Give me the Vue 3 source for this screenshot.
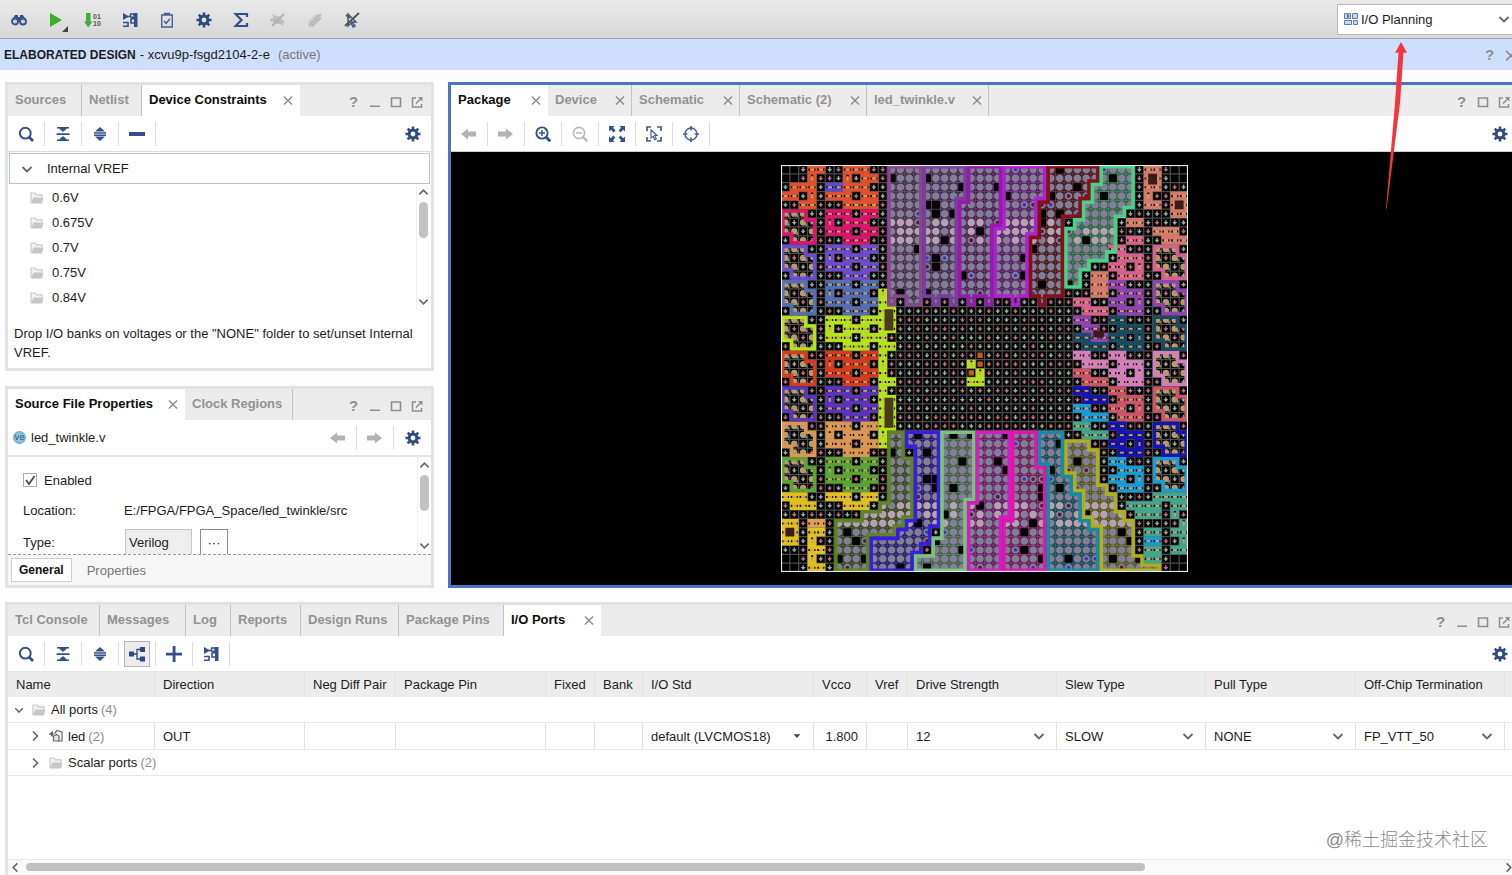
<template>
  <div class="app">
    <svg class="sprite" aria-hidden="true">
      <symbol id="i-binoculars" viewBox="0 0 16 16">
        <path d="M4 3h3v2h2V3h3l3 5v2H1V8z" fill="#3a5286" />
        <circle cx="4" cy="9.5" r="3" fill="#c9d2e4" stroke="#3a5286" stroke-width="1.8" />
        <circle cx="12" cy="9.5" r="3" fill="#c9d2e4" stroke="#3a5286" stroke-width="1.8" />
      </symbol>
      <symbol id="i-play" viewBox="0 0 16 16"><path d="M2 1l12 7-12 7z" fill="#3dae2b" /></symbol>
      <symbol id="i-bits" viewBox="0 0 16 16"><path d="M2 1h4.500v8.500h2L4.200 15.500 0 9.500h2z" fill="#3fae3c" /></symbol>
      <symbol id="i-route" viewBox="0 0 16 16">
        <path d="M1 1l6 3.500L1 8zM12 1h3.500v14H12z" fill="#34508a" />
        <path d="M5 4.500h3.500V2H12v2.500" fill="none" stroke="#34508a" stroke-width="1.500" />
        <path d="M8.500 4.500h4v3h-4z" fill="#34508a" />
        <path d="M1 10.500h5V15M1 14.200h5M9 7v4h3" fill="none" stroke="#34508a" stroke-width="1.600" />
      </symbol>
      <symbol id="i-clip" viewBox="0 0 16 16">
        <path d="M2.700 3h10.600v12H2.700zM5.500 3V1.500h5V3" fill="none" stroke="#4c6293" stroke-width="1.400" />
        <path d="M5 9l2.200 2.300L11 6.800" fill="none" stroke="#4c6293" stroke-width="1.500" />
      </symbol>
      <symbol id="i-gear" viewBox="0 0 16 16">
        <circle cx="8" cy="8" r="3.900" fill="none" stroke="#2f4a80" stroke-width="3" />
        <path d="M8 .500v3M8 12.500v3M.500 8h3M12.500 8h3M2.700 2.700l2 2M11.300 11.300l2 2M2.700 13.300l2-2M11.300 4.700l2-2" stroke="#2f4a80" stroke-width="2.600" />
      </symbol>
      <symbol id="i-sigma" viewBox="0 0 16 16">
        <path d="M14 5V2H2.500l6 6-6 6H14v-3" fill="none" stroke="#34508a" stroke-width="2.200" />
      </symbol>
      <symbol id="i-nopin" viewBox="0 0 16 16">
        <path d="M3 3l10 10M1 8l7-3 5 5-5 1z" stroke="#bdbdbd" fill="#bdbdbd" stroke-width="2" />
        <path d="M2 14L14 2" stroke="#b2b2b2" stroke-width="2" />
      </symbol>
      <symbol id="i-noerase" viewBox="0 0 16 16">
        <path d="M1 10l8-8 4 1 1 4-8 8-4-1z" fill="#c8c8c8" />
        <path d="M2 14L14 2M5 14l9-8" stroke="#b4b4b4" stroke-width="1.500" />
      </symbol>
      <symbol id="i-noselect" viewBox="0 0 16 16">
        <path d="M4 2l8 8H8l3 4-2 1-2-4-3 3z" fill="none" stroke="#46587e" stroke-width="1.500" />
        <path d="M1 14L15 1M2 3l4 3" stroke="#555" stroke-width="2" />
      </symbol>
      <symbol id="i-search" viewBox="0 0 16 16">
        <circle cx="7.300" cy="7.200" r="5.400" fill="none" stroke="#34508a" stroke-width="2" />
        <path d="M11 11l4 4" stroke="#34508a" stroke-width="2.800" />
      </symbol>
      <symbol id="i-collapse" viewBox="0 0 16 16">
        <path d="M2 1h12v1.500H12L8 6 4 2.500H2zM2 15h12v-1.500H12L8 10l-4 3.500H2zM1.500 7.200h13v1.700h-13z" fill="#34508a" />
      </symbol>
      <symbol id="i-expand" viewBox="0 0 16 16">
        <path d="M8 1l5 4.500H3zM8 15l5-4.500H3zM2 6.300h12v1.400H2zM2 8.600h12V10H2z" fill="#34508a" />
      </symbol>
      <symbol id="i-minus" viewBox="0 0 16 16"><path d="M0 6h16v4H0z" fill="#34508a" /></symbol>
      <symbol id="i-plus" viewBox="0 0 16 16"><path d="M6.700 0h2.800v6.700H16v2.800H9.500V16H6.700V9.500H0V6.700h6.700z" fill="#34508a" /></symbol>
      <symbol id="i-tree" viewBox="0 0 16 16">
        <path d="M0 5.500h5v5H0zM11 1h5v5h-5zM11 10.500h5v5h-5z" fill="#2f4a80" />
        <path d="M5 8h3M11 3.500H8v9.500h3" fill="none" stroke="#2f4a80" stroke-width="1.300" />
      </symbol>
      <symbol id="i-left" viewBox="0 0 16 16"><path d="M0 8l7-5.500V5.500h8v5H7v3z" fill="#b3b3b3" /></symbol>
      <symbol id="i-right" viewBox="0 0 16 16"><path d="M15 8L8 2.500V5.500H0v5h8v3z" fill="#b3b3b3" /></symbol>
      <symbol id="i-zoomin" viewBox="0 0 16 16">
        <circle cx="7" cy="7" r="5.600" fill="none" stroke="#34508a" stroke-width="1.900" />
        <path d="M11 11l4.300 4.300" stroke="#34508a" stroke-width="3" />
        <path d="M7 4v6M4 7h6" stroke="#34508a" stroke-width="1.500" />
      </symbol>
      <symbol id="i-zoomout" viewBox="0 0 16 16">
        <circle cx="7" cy="7" r="5.600" fill="none" stroke="#b8b8b8" stroke-width="1.600" />
        <path d="M11 11l4.300 4.300" stroke="#b8b8b8" stroke-width="2.400" />
        <path d="M4 7h6" stroke="#b8b8b8" stroke-width="1.500" />
      </symbol>
      <symbol id="i-fit" viewBox="0 0 16 16">
        <path d="M0 0h5.500L4 1.800l2.600 2.600-2 2L2 3.800.200 5.500zM16 0v5.500l-1.800-1.700-2.600 2.600-2-2L12 1.800 10.500 0zM0 16v-5.500l1.800 1.700 2.600-2.600 2 2L4 14.200 5.500 16zM16 16h-5.500l1.700-1.800-2.600-2.600 2-2 2.600 2.600 1.800-1.700z" fill="#34508a" />
      </symbol>
      <symbol id="i-select" viewBox="0 0 16 16">
        <path d="M1 5V1h4M11 1h4v4M15 11v4h-4M5 15H1v-4" fill="none" stroke="#46598a" stroke-width="1.700" />
        <path d="M5 4l6 5.500H8.700l1.600 3.500-1.500.700-1.500-3.400L5 12z" fill="#fff" stroke="#46598a" stroke-width="1.100" />
      </symbol>
      <symbol id="i-target" viewBox="0 0 16 16">
        <circle cx="8" cy="8" r="6" fill="none" stroke="#4a5f96" stroke-width="1.500" />
        <path d="M8 0v4.500M8 11.500V16M0 8h4.500M11.500 8H16" stroke="#4a5f96" stroke-width="1.700" />
      </symbol>
      <symbol id="i-min" viewBox="0 0 12 12"><path d="M1 9.500h10V11H1z" fill="#8e8e8e" /></symbol>
      <symbol id="i-max" viewBox="0 0 12 12"><path d="M1.500 2h9v8.500h-9z" fill="none" stroke="#8e8e8e" stroke-width="1.600" /></symbol>
      <symbol id="i-float" viewBox="0 0 12 12">
        <path d="M5 2H1.500v9h9V8M5 7.500L10 2.500" fill="none" stroke="#8e8e8e" stroke-width="1.500" />
        <path d="M7 1h4.500v4.500z" fill="#8e8e8e" />
      </symbol>
      <symbol id="i-close" viewBox="0 0 10 10"><path d="M1 1.500l8 8M9 1.500l-8 8" stroke="#8a8a8a" stroke-width="1.400" /></symbol>
      <symbol id="i-down" viewBox="0 0 12 12"><path d="M1.500 4L6 8.500 10.500 4" fill="none" stroke="#666" stroke-width="1.800" /></symbol>
      <symbol id="i-up" viewBox="0 0 12 12"><path d="M1.500 8L6 3.500 10.500 8" fill="none" stroke="#666" stroke-width="1.800" /></symbol>
      <symbol id="i-next" viewBox="0 0 12 12"><path d="M4 1.500L8.500 6 4 10.500" fill="none" stroke="#666" stroke-width="1.700" /></symbol>
      <symbol id="i-prev" viewBox="0 0 12 12"><path d="M8 1.500L3.500 6 8 10.500" fill="none" stroke="#666" stroke-width="1.700" /></symbol>
      <symbol id="i-caret" viewBox="0 0 12 12"><path d="M2 4h8L6 8.500z" fill="#444" /></symbol>
      <symbol id="i-folder" viewBox="0 0 14 14">
        <path d="M1 12V2h4l1.500 1.800H12V6" fill="#f2f2f2" stroke="#c9c9c9" stroke-width="1.200" />
        <path d="M3.500 6.500H13.500L12 12.500H1z" fill="#c6c6c6" />
      </symbol>
      <symbol id="i-port" viewBox="0 0 14 14">
        <path d="M5.500 4.500L8 1.500l5 1.500v9H8.500" fill="#f4f4f4" stroke="#6a6a6a" stroke-width="1.200" />
        <path d="M4.500 7l3-1.500 2.500 1.500v5H4.500z" fill="#e2e2e2" stroke="#6a6a6a" stroke-width="1.200" />
        <path d="M0 5h5M3.500 2.500L.800 5l2.700 2.500z" fill="#6a6a6a" stroke="#6a6a6a" />
      </symbol>
      <symbol id="i-layout" viewBox="0 0 14 14">
        <path d="M.500 1.500h3v5h-3zM4.500 1.500h2v5h-2zM8.500 1.500h5v5h-5zM.500 8.500h7v4h-7zM9.500 8.500h4v4h-4z" fill="#c4daf2" stroke="#5f7ea8" />
      </symbol>
    </svg>

    <header class="mainbar">
      <div class="mainbar-tools">
        <button v-for="t in mainTools" :key="t" type="button" class="tool plain" :aria-label="t" :class="t">
          <svg class="ico"><use :href="'#i-' + t" /></svg>
          <span v-if="t === 'bits'" class="digits">01<br />10</span>
        </button>
      </div>
      <label class="layout-select">
        <svg class="ico14"><use href="#i-layout" /></svg>
        <select aria-label="Layout"><option>I/O Planning</option></select>
        <svg class="ico12"><use href="#i-down" /></svg>
      </label>
    </header>

    <div class="shell">
      <div class="banner">
        <h1>ELABORATED DESIGN</h1>
        <span>- xcvu9p-fsgd2104-2-e</span>
        <span class="active-state">(active)</span>
        <div class="banner-controls">
          <button type="button" class="control help">?</button>
          <button type="button" class="control" aria-label="Close"><svg class="ico12"><use href="#i-close" /></svg></button>
        </div>
      </div>

      <main class="workspace">
        <div class="side">
          <section class="panel">
            <div class="tabbar">
              <button v-for="t in constraintTabs" :key="t.name" type="button" class="tab" :class="{ active: t.active }" :style="{ width: t.width + 'px' }">
                {{ t.name }}<svg v-if="t.close" class="ico10"><use href="#i-close" /></svg>
              </button>
              <div class="controls">
                <button type="button" class="control help">?</button>
                <button v-for="c in ['min', 'max', 'float']" :key="c" type="button" class="control" :aria-label="c"><svg class="ico12"><use :href="'#i-' + c" /></svg></button>
              </div>
            </div>
            <div class="toolbar">
              <button v-for="t in ['search', 'collapse', 'expand', 'minus']" :key="t" type="button" class="tool" :aria-label="t"><svg class="ico"><use :href="'#i-' + t" /></svg></button>
              <button type="button" class="tool settings" aria-label="Settings"><svg class="ico"><use href="#i-gear" /></svg></button>
            </div>
            <div class="constraints">
              <button type="button" class="vref"><svg class="ico12"><use href="#i-down" /></svg>Internal VREF</button>
              <div class="scroll-area">
                <ul class="voltages">
                  <li v-for="v in voltages" :key="v"><svg class="ico14"><use href="#i-folder" /></svg>{{ v }}</li>
                </ul>
                <div class="vscroll">
                  <svg class="ico12"><use href="#i-up" /></svg>
                  <div class="thumb"></div>
                  <svg class="ico12"><use href="#i-down" /></svg>
                </div>
              </div>
              <p class="hint">Drop I/O banks on voltages or the "NONE" folder to set/unset Internal VREF.</p>
            </div>
          </section>

          <section class="panel">
            <div class="tabbar">
              <button v-for="t in propertyTabs" :key="t.name" type="button" class="tab" :class="{ active: t.active }" :style="{ width: t.width + 'px' }">
                {{ t.name }}<svg v-if="t.close" class="ico10"><use href="#i-close" /></svg>
              </button>
              <div class="controls">
                <button type="button" class="control help">?</button>
                <button v-for="c in ['min', 'max', 'float']" :key="c" type="button" class="control" :aria-label="c"><svg class="ico12"><use :href="'#i-' + c" /></svg></button>
              </div>
            </div>
            <div class="toolbar file-bar">
              <span class="ve">ve</span>
              <span class="file-name">led_twinkle.v</span>
              <button type="button" class="tool" aria-label="Back"><svg class="ico"><use href="#i-left" /></svg></button>
              <button type="button" class="tool" aria-label="Forward"><svg class="ico"><use href="#i-right" /></svg></button>
              <button type="button" class="tool last" aria-label="Settings"><svg class="ico"><use href="#i-gear" /></svg></button>
            </div>
            <div class="scroll-area props">
              <div class="form">
                <label class="check">
                  <input type="checkbox" checked />
                  <svg class="ico12" viewBox="0 0 12 12"><path d="M2 6l3 4 5.500-8" fill="none" stroke="#444" stroke-width="1.700" /></svg>
                  <span>Enabled</span>
                </label>
                <div class="field"><span>Location:</span><span>E:/FPGA/FPGA_Space/led_twinkle/src</span></div>
                <div class="field type">
                  <label for="type">Type:</label>
                  <input id="type" type="text" value="Verilog" readonly />
                  <button type="button" class="dots" aria-label="Choose type">···</button>
                </div>
              </div>
              <div class="vscroll">
                <svg class="ico12"><use href="#i-up" /></svg>
                <div class="thumb"></div>
                <svg class="ico12"><use href="#i-down" /></svg>
              </div>
            </div>
            <div class="subtabs">
              <button type="button" class="subtab on">General</button>
              <button type="button" class="subtab">Properties</button>
            </div>
          </section>
        </div>

        <section class="panel package">
          <div class="tabbar">
            <button v-for="t in viewTabs" :key="t.name" type="button" class="tab" :class="{ active: t.active }" :style="{ width: t.width + 'px' }">
              {{ t.name }}<svg class="ico10"><use href="#i-close" /></svg>
            </button>
            <div class="controls">
              <button type="button" class="control help">?</button>
              <button v-for="c in ['max', 'float']" :key="c" type="button" class="control" :aria-label="c"><svg class="ico12"><use :href="'#i-' + c" /></svg></button>
            </div>
          </div>
          <div class="toolbar">
            <button v-for="t in viewTools" :key="t" type="button" class="tool" :aria-label="t"><svg class="ico"><use :href="'#i-' + t" /></svg></button>
            <button type="button" class="tool settings" aria-label="Settings"><svg class="ico"><use href="#i-gear" /></svg></button>
          </div>
          <div class="canvas">
            <svg class="chip" viewBox="0 0 46 46">
              <defs>
                <clipPath v-for="(b, i) in banks" :id="'bank' + i" :key="i"><path :d="b.d" /></clipPath>
                <clipPath v-for="(q, i) in sideQuads" :id="'quad' + i" :key="i"><path :d="q.d" /></clipPath>
              </defs>
              <path :d="gridPath" stroke="#4c4c4c" stroke-width="0.14" />
              <path v-for="(b, i) in banks" :key="'f' + i" :d="b.d" :fill="b.color" fill-opacity="0.38" />
              <path v-for="(l, i) in layers" :key="'l' + i" :d="l.d" :fill="l.fill" />
              <path v-for="(b, i) in banks" :key="'s' + i" :d="b.d" fill="none" :stroke="b.color" stroke-width="0.8" :clip-path="`url(#bank${i})`" />
              <path v-for="(q, i) in sideQuads" :key="'q' + i" :d="q.d" fill="none" :stroke="q.color" stroke-width="0.8" :clip-path="`url(#quad${i})`" />
              <rect x="0" y="0" width="46" height="46" fill="none" stroke="#e8e8e8" stroke-width="0.25" />
            </svg>
          </div>
        </section>
      </main>

      <section class="panel ports">
        <div class="tabbar">
          <button v-for="t in bottomTabs" :key="t.name" type="button" class="tab" :class="{ active: t.active }" :style="{ width: t.width + 'px' }">
            {{ t.name }}<svg v-if="t.close" class="ico10"><use href="#i-close" /></svg>
          </button>
          <div class="controls">
            <button type="button" class="control help">?</button>
            <button v-for="c in ['min', 'max', 'float']" :key="c" type="button" class="control" :aria-label="c"><svg class="ico12"><use :href="'#i-' + c" /></svg></button>
          </div>
        </div>
        <div class="toolbar">
          <button v-for="t in portTools" :key="t" type="button" class="tool" :class="{ pressed: t === 'tree' }" :aria-label="t"><svg class="ico"><use :href="'#i-' + t" /></svg></button>
          <button type="button" class="tool settings" aria-label="Settings"><svg class="ico"><use href="#i-gear" /></svg></button>
        </div>
        <div class="table-wrap">
          <table>
            <colgroup>
              <col v-for="c in columns" :key="c.name" :style="{ width: c.width + 'px' }" />
              <col />
            </colgroup>
            <thead>
              <tr>
                <th v-for="c in columns" :key="c.name">{{ c.name }}</th>
                <th></th>
              </tr>
            </thead>
            <tbody>
              <tr>
                <td :colspan="columns.length + 1">
                  <div class="node"><svg class="ico10"><use href="#i-down" /></svg><svg class="ico14"><use href="#i-folder" /></svg>All ports <span class="count">(4)</span></div>
                </td>
              </tr>
              <tr>
                <td>
                  <div class="node child"><svg class="ico12"><use href="#i-next" /></svg><svg class="ico14"><use href="#i-port" /></svg>led <span class="count">(2)</span></div>
                </td>
                <td>OUT</td>
                <td></td>
                <td></td>
                <td></td>
                <td></td>
                <td><div class="pick"><select aria-label="I/O Std"><option>default (LVCMOS18)</option></select><svg class="ico12 small"><use href="#i-caret" /></svg></div></td>
                <td class="num">1.800</td>
                <td></td>
                <td v-for="p in picks" :key="p.label"><div class="pick"><select :aria-label="p.label"><option>{{ p.value }}</option></select><svg class="ico12"><use href="#i-down" /></svg></div></td>
                <td></td>
              </tr>
              <tr>
                <td :colspan="columns.length + 1">
                  <div class="node child"><svg class="ico12"><use href="#i-next" /></svg><svg class="ico14"><use href="#i-folder" /></svg>Scalar ports <span class="count">(2)</span></div>
                </td>
              </tr>
            </tbody>
          </table>
        </div>
        <div class="hscroll">
          <svg class="ico12"><use href="#i-prev" /></svg>
          <div class="track"><div class="thumb" :style="{ width: scrollWidth + '%' }"></div></div>
          <svg class="ico12"><use href="#i-next" /></svg>
        </div>
      </section>
    </div>

    <svg class="pointer" viewBox="0 0 24 168"><path d="M17 1L23 12 19.500 11.500 16 62 2.600 168 2 167.500 11 62 14.500 11.500 11 12z" fill="#f6343c" /></svg>
    <div class="watermark">@稀土掘金技术社区</div>
  </div>
</template>

<script setup>
import { ref } from "vue";

const mainTools = ["binoculars", "play", "bits", "route", "clip", "gear", "sigma", "nopin", "noerase", "noselect"];
const viewTools = ["left", "right", "zoomin", "zoomout", "fit", "select", "target"];
const portTools = ["search", "collapse", "expand", "tree", "plus", "route"];
const voltages = ["0.6V", "0.675V", "0.7V", "0.75V", "0.84V"];
const scrollWidth = ref(76);

const constraintTabs = [
  { name: "Sources", width: 74 },
  { name: "Netlist", width: 60 },
  { name: "Device Constraints", width: 158, active: true, close: true },
];
const propertyTabs = [
  { name: "Source File Properties", width: 177, active: true, close: true },
  { name: "Clock Regions", width: 108 },
];
const viewTabs = [
  { name: "Package", width: 97, active: true },
  { name: "Device", width: 84 },
  { name: "Schematic", width: 108 },
  { name: "Schematic (2)", width: 127 },
  { name: "led_twinkle.v", width: 122 },
];
const bottomTabs = [
  { name: "Tcl Console", width: 92 },
  { name: "Messages", width: 86 },
  { name: "Log", width: 45 },
  { name: "Reports", width: 70 },
  { name: "Design Runs", width: 98 },
  { name: "Package Pins", width: 105 },
  { name: "I/O Ports", width: 97, active: true, close: true },
];
const columns = [
  { name: "Name", width: 147 },
  { name: "Direction", width: 150 },
  { name: "Neg Diff Pair", width: 91 },
  { name: "Package Pin", width: 150 },
  { name: "Fixed", width: 49 },
  { name: "Bank", width: 48 },
  { name: "I/O Std", width: 171 },
  { name: "Vcco", width: 53 },
  { name: "Vref", width: 41 },
  { name: "Drive Strength", width: 149 },
  { name: "Slew Type", width: 149 },
  { name: "Pull Type", width: 150 },
  { name: "Off-Chip Termination", width: 149 },
];
const picks = [
  { label: "Drive Strength", value: "12" },
  { label: "Slew Type", value: "SLOW" },
  { label: "Pull Type", value: "NONE" },
  { label: "Off-Chip Termination", value: "FP_VTT_50" },
];

// package map: 46 x 46 pins, every coordinate below is in pins
const SIZE = 46;

const banks = [
  { color: "#874790", pts: [12, 0, 16, 0, 16, 16, 14, 16, 14, 15, 13, 15, 13, 16, 12, 16] },
  { color: "#7a3f9e", pts: [16, 0, 21, 0, 21, 4, 20, 4, 20, 16, 19, 16, 19, 15, 18, 15, 18, 16, 17, 16, 17, 15, 16, 15] },
  { color: "#951cab", pts: [21, 0, 25, 0, 25, 7, 24, 7, 24, 16, 23, 16, 23, 15, 22, 15, 22, 16, 21, 16, 21, 15, 20, 15, 20, 4, 21, 4] },
  { color: "#b01fd2", pts: [25, 0, 30, 0, 30, 4, 29, 4, 29, 8, 28, 8, 28, 15, 27, 15, 27, 16, 26, 16, 26, 15, 24, 15, 24, 7, 25, 7] },
  { color: "#85101a", pts: [30, 0, 36, 0, 36, 2, 35, 2, 35, 4, 34, 4, 34, 6, 32, 6, 32, 15, 30, 15, 30, 16, 29, 16, 29, 15, 28, 15, 28, 8, 29, 8, 29, 4, 30, 4] },
  { color: "#48d283", pts: [36, 0, 40, 0, 40, 5, 39, 5, 39, 6, 38, 6, 38, 10, 37, 10, 37, 11, 35, 11, 35, 12, 34, 12, 34, 14, 32, 14, 32, 7, 33, 7, 33, 6, 34, 6, 34, 4, 35, 4, 35, 2, 36, 2] },
  { color: "#5c8420", pts: [12, 30, 14, 30, 14, 33, 15, 33, 15, 40, 14, 40, 14, 41, 13, 41, 13, 42, 10, 42, 10, 46, 6, 46, 6, 40, 9, 40, 9, 39, 11, 39, 11, 38, 12, 38] },
  { color: "#381ce0", pts: [14, 30, 18, 30, 18, 41, 17, 41, 17, 43, 16, 43, 16, 44, 15, 44, 15, 46, 10, 46, 10, 42, 13, 42, 13, 41, 14, 41, 14, 40, 15, 40, 15, 32, 14, 32] },
  { color: "#7cc27d", pts: [18, 30, 22, 30, 22, 38, 21, 38, 21, 46, 15, 46, 15, 44, 17, 44, 17, 42, 18, 42] },
  { color: "#d41bc4", pts: [22, 30, 26, 30, 26, 40, 25, 40, 25, 46, 21, 46, 21, 38, 22, 38] },
  { color: "#e414ae", pts: [26, 30, 29, 30, 29, 34, 30, 34, 30, 46, 25, 46, 25, 40, 26, 40] },
  { color: "#168ba6", pts: [29, 30, 32, 30, 32, 35, 33, 35, 33, 37, 34, 37, 34, 40, 35, 40, 35, 41, 36, 41, 36, 46, 30, 46, 30, 34, 29, 34] },
  { color: "#adb018", pts: [32, 31, 35, 31, 35, 32, 36, 32, 36, 36, 37, 36, 37, 37, 38, 37, 38, 39, 39, 39, 39, 40, 40, 40, 40, 44, 41, 44, 41, 45, 43, 45, 43, 46, 36, 46, 36, 41, 35, 41, 35, 40, 34, 40, 34, 37, 33, 37, 33, 35, 32, 35] },
].map((b) => ({ ...b, d: toPath(b.pts) }));

const leftColors = ["#dc146e", "#6b4bd0", "#526eb4", "#b4e31c", "#d63c1c", "#5a34c0", "#dc9650", "#5aa532"];
const rightColors = ["#d8608c", "#8d43b4", "#144c64", "#d47cc0", "#cc5468", "#1414b4", "#189cd4"];

const WIDE = ["###k##", "#k###k", "###k##", "kk###k"];
const INNER = ["##kk", "k###", "##k#", "k###"];
const SIDE = ["TTT.", "TKTK", "TTKT", ".TTK"];

const sideQuads = [
  ...leftColors.map((color, i) => quadOutline(0, 5 + i * 4, color)),
  ...rightColors.map((color, i) => quadOutline(42, 9 + i * 4, color)),
];

// blocks of coloured pins: [colour, col, row, width, height]
const patches = [
  ["#e0502c", 3, 0, 2, 1], ["#e0502c", 3, 1, 1, 1], ["#e0502c", 1, 2, 3, 3], ["#e0502c", 0, 3, 1, 1],
  ["#e0502c", 7, 0, 3, 5], ["#e0502c", 10, 1, 1, 1], ["#e0502c", 5, 3, 6, 1], ["#e0502c", 10, 4, 1, 1],
  ["#5b49d6", 5, 2, 2, 1],
  ["#b4e31c", 11, 14, 1, 18], ["#b4e31c", 12, 16, 1, 3], ["#b4e31c", 12, 20, 1, 1], ["#b4e31c", 12, 24, 1, 1], ["#b4e31c", 12, 26, 1, 4],
  ["#b4e31c", 21, 22, 1, 1], ["#b4e31c", 22, 23, 1, 2], ["#b4e31c", 21, 24, 1, 1],
  ["#e0c01e", 0, 37, 3, 1], ["#e0c01e", 1, 38, 3, 1], ["#e0c01e", 5, 37, 3, 1], ["#e0c01e", 7, 38, 3, 1], ["#e0c01e", 9, 37, 2, 1],
  ["#e0c01e", 0, 40, 2, 3], ["#e0a050", 3, 40, 2, 1], ["#e0c01e", 3, 41, 1, 5], ["#e0c01e", 4, 41, 1, 1], ["#e0c01e", 4, 43, 1, 1], ["#e0c01e", 4, 45, 1, 1],
  ["#d47a6a", 41, 0, 2, 5], ["#d47a6a", 44, 3, 2, 3], ["#d47a6a", 39, 6, 2, 1], ["#d47a6a", 42, 7, 3, 1], ["#d47a6a", 43, 8, 3, 1],
  ["#d8608c", 39, 8, 2, 1], ["#d47a6a", 35, 12, 2, 3],
  ["#d8608c", 33, 15, 2, 1], ["#d8608c", 34, 16, 3, 1],
  ["#8d43b4", 33, 17, 2, 1], ["#8d43b4", 34, 18, 2, 1], ["#8d43b4", 35, 19, 2, 1], ["#144c64", 33, 19, 2, 1], ["#144c64", 34, 20, 3, 1],
  ["#d47cc0", 33, 21, 2, 1], ["#d47cc0", 34, 22, 3, 1], ["#cc5468", 33, 23, 2, 1], ["#cc5468", 34, 24, 3, 1],
  ["#1414b4", 33, 25, 2, 1], ["#1414b4", 34, 26, 3, 1], ["#189cd4", 33, 27, 2, 1], ["#189cd4", 34, 28, 3, 1],
  ["#44a48c", 33, 29, 2, 1], ["#44a48c", 34, 30, 3, 1],
  ["#44a48c", 42, 37, 4, 1], ["#44a48c", 39, 38, 4, 1], ["#44a48c", 40, 39, 3, 1], ["#44a48c", 44, 38, 2, 6], ["#44a48c", 41, 41, 2, 4], ["#189cd4", 41, 42, 2, 1],
];

// pins that stay dark inside a patch
const holes = new Set(["2,3", "1,4", "8,1", "8,3", "42,3", "44,40", "45,39", "44,42"]);

const cells = {};
patches.forEach(([color, col, row, w, h]) => {
  for (let r = row; r < row + h; r++) {
    for (let c = col; c < col + w; c++) {
      if (!holes.has(`${c},${r}`)) cells[`${c},${r}`] = { kind: "#", color };
    }
  }
});
function stamp(map, col, row, color) {
  map.forEach((line, r) => {
    [...line].forEach((kind, c) => {
      if (kind !== ".") cells[`${col + c},${row + r}`] = { kind, color };
    });
  });
}
leftColors.forEach((color, i) => {
  stamp(SIDE, 0, 5 + i * 4, color);
  stamp(WIDE, 5, 5 + i * 4, color);
});
rightColors.forEach((color, i) => {
  stamp(SIDE, 42, 9 + i * 4, color);
  stamp(INNER, 37, 9 + i * 4, color);
});

const gridPath = Array.from({ length: SIZE + 1 }, (_, i) => `M${i} 0V46M0 ${i}H46`).join("");
const layers = buildLayers();

function toPath(pts) {
  let d = "";
  for (let i = 0; i < pts.length; i += 2) d += `${i ? "L" : "M"}${pts[i]} ${pts[i + 1]}`;
  return d + "Z";
}

function quadOutline(x, y, color) {
  return { color, d: toPath([x, y, x + 3, y, x + 3, y + 1, x + 4, y + 1, x + 4, y + 4, x + 1, y + 4, x + 1, y + 3, x, y + 3]) };
}

function inside(pts, x, y) {
  let hit = false;
  for (let i = 0, j = pts.length - 2; i < pts.length; j = i, i += 2) {
    const [xi, yi, xj, yj] = [pts[i], pts[i + 1], pts[j], pts[j + 1]];
    if (yi > y !== yj > y && x < ((xj - xi) * (y - yi)) / (yj - yi) + xi) hit = !hit;
  }
  return hit;
}

function dot(x, y, r) {
  return `M${x - r} ${y}a${r} ${r} 0 1 0 ${r * 2} 0a${r} ${r} 0 1 0 ${-r * 2} 0`;
}

function buildLayers() {
  const out = {};
  const add = (fill, d) => (out[fill] = (out[fill] || "") + d);
  const ground = (c, r) => {
    const x = c + 0.5;
    add((c * c + r * 5) % 7 < 3 ? "#c0707e" : "#9aaba0", `M${x - 0.08} ${r + 0.24}h.16v.2h.2l-.28 .34l-.28 -.34h.2z`);
  };
  const tops = [];
  for (let r = 0; r < SIZE; r++) {
    for (let c = 0; c < SIZE; c++) {
      const corner = (c < 2 || c > 43) && (r < 2 || r > 43);
      const cell = cells[`${c},${r}`];
      if (cell && cell.kind === "#") {
        add(cell.color, `M${c} ${r}h1v1h-1z`);
        tops.push([c, r]);
      } else if (cell && cell.kind === "T") {
        add("#b89a72", dot(c + 0.5, r + 0.5, 0.36));
        add("#8f8a78", `M${c + 0.75} ${r + 0.6}h.2v.3h-.2z`);
      } else if (banks.some((b) => inside(b.pts, c + 0.5, r + 0.5))) {
        const n = (c * c * 7 + r * r * 3 + c * r) % 31;
        if (n === 0 || n === 13) {
          add("#060606", `M${c + 0.05} ${r + 0.05}h.9v.9h-.9z`);
          ground(c, r);
        } else {
          const light = (r > 5 && r < 9) || (r > 37 && r < 41);
          add(light && n % 3 ? "#b5a2b0" : "#817e96", dot(c + 0.5, r + 0.5, 0.42));
          if (n === 6) add("#5a1838", dot(c + 0.5, r + 0.5, 0.22));
          if (n === 20) add("#3434d0", dot(c + 0.5, r + 0.5, 0.2));
        }
      } else if (!corner) {
        ground(c, r);
      }
    }
  }
  const list = Object.entries(out).map(([fill, d]) => ({ fill, d }));
  // pad marks over the coloured pins
  let dark = "";
  let tan = "";
  tops.forEach(([c, r]) => {
    const solid = (x, y) => cells[`${x},${y}`]?.kind === "#";
    if (solid(c - 1, r) || solid(c + 1, r)) {
      dark += `M${c + 0.1} ${r + 0.4}h.2v.24h-.2zM${c + 0.75} ${r + 0.4}h.15v.24h-.15z`;
      tan += `M${c + 0.3} ${r + 0.42}h.45v.2h-.45z`;
    } else {
      dark += `M${c + 0.4} ${r + 0.1}h.24v.2h-.24z`;
      tan += `M${c + 0.42} ${r + 0.3}h.2v.45h-.2z`;
    }
  });
  list.push({ fill: "#1c1410", d: dark }, { fill: "#c9a070", d: tan });
  list.push({ fill: "#4a3a18", d: "M11.700 16.300h1v2.400h-1zM11.700 26.300h1v3.400h-1z" });
  list.push({ fill: "#c65a10", d: "M22.200 21.200h.6v.6h-.6zM22.200 22.200h.6v.6h-.6zM21.200 23.200h.6v.6h-.6z" });
  list.push({ fill: "#3a1c18", d: "M41.500 1h1v1.200h-1zM44.500 4h1v1h-1zM.500 41h1v1h-1zM35.300 18.700h1.200v.8h-1.200z" });
  return list;
}
</script>

<style>
html,
body {
  background: #fff;
}
</style>

<style scoped>
.app {
  position: relative;
  display: flex;
  flex-direction: column;
  height: 100vh;
  overflow: hidden;
  background: #fdfdfd;
  color: #1c1c1c;
  font-family: "Liberation Sans", Arial, sans-serif;
  font-size: 13px;
}
.app * {
  box-sizing: border-box;
}
.sprite {
  position: absolute;
  width: 0;
  height: 0;
}
button,
select,
input {
  margin: 0;
  padding: 0;
  border: 0;
  border-radius: 0;
  background: none;
  color: inherit;
  font: inherit;
}
select {
  appearance: none;
  outline: none;
}
svg {
  display: block;
  flex: none;
}
.ico {
  width: 16px;
  height: 16px;
}
.ico14 {
  width: 14px;
  height: 14px;
}
.ico12 {
  width: 12px;
  height: 12px;
}
.ico12.small,
.ico10 {
  width: 10px;
  height: 10px;
}

.mainbar {
  display: flex;
  flex: none;
  align-items: center;
  justify-content: space-between;
  height: 39px;
  border-bottom: 1px solid #a3a7ae;
  background: linear-gradient(#e9e9e9, #d8d8d8);
}
.mainbar-tools {
  display: flex;
  padding-top: 2px;
}
.play {
  position: relative;
}
.play::after {
  content: "";
  position: absolute;
  right: 6px;
  bottom: 0;
  border: 3px solid transparent;
  border-right-color: #444;
  border-bottom-color: #444;
}
.bits .ico {
  margin-right: -7px;
}
.digits {
  color: #555;
  font-size: 7px;
  font-weight: bold;
  line-height: 7px;
}
.layout-select {
  display: flex;
  align-items: center;
  gap: 3px;
  width: 175px;
  height: 31px;
  padding: 0 2px 0 6px;
  border: 1px solid #b9b9b9;
  border-right: 0;
  background: #fff;
}
.layout-select select {
  flex: 1;
}

.shell {
  display: flex;
  flex: 1;
  flex-direction: column;
  width: calc(100% + 9px);
  min-height: 0;
}
.banner {
  display: flex;
  flex: none;
  align-items: center;
  gap: 4px;
  height: 31px;
  padding: 0 0 0 4px;
  background: #cddffb;
}
.banner h1 {
  margin: 0;
  font-size: 12px;
}
.active-state {
  margin-left: 4px;
  color: #777;
}
.banner-controls {
  display: flex;
  margin-left: auto;
}

.workspace {
  display: flex;
  flex: none;
  gap: 14px;
  padding: 12px 0 14px 5px;
}
.side {
  display: flex;
  flex: none;
  flex-direction: column;
  gap: 15px;
  width: 429px;
}
.panel {
  border: 3px solid #e1e3e3;
  background: #fff;
}
.package {
  display: flex;
  flex: 1;
  flex-direction: column;
  border-color: #4a75c4;
}
.tabbar {
  display: flex;
  flex: none;
  height: 31px;
  background: #ececec;
}
.tab {
  display: flex;
  flex: none;
  align-items: center;
  justify-content: space-between;
  padding: 0 6px 2px 7px;
  border-right: 1px solid #c2c2c2;
  color: #929292;
  font-weight: bold;
  white-space: nowrap;
}
.tab.active {
  border-color: transparent;
  background: #fff;
  color: #0c0c0c;
}
.controls {
  display: flex;
  align-items: center;
  margin-left: auto;
  padding: 2px 4px 0 0;
}
.control {
  display: flex;
  align-items: center;
  justify-content: center;
  width: 21px;
  height: 20px;
}
.help {
  color: #8e8e8e;
  font-size: 15px;
  font-weight: bold;
}
.toolbar {
  display: flex;
  flex: none;
  align-items: center;
  height: 35px;
}
.tool {
  display: flex;
  align-items: center;
  justify-content: center;
  width: 37px;
  height: 24px;
  border-right: 1px solid #dcdcdc;
}
.tool.plain,
.tool.settings,
.tool.last {
  border-right: 0;
}
.settings {
  margin-left: auto;
}
.pressed .ico {
  width: 26px;
  height: 26px;
  padding: 4px;
  border: 1px solid #b5b5b5;
  background: #ececec;
}

.constraints {
  padding: 1px;
  border-top: 1px solid #dcdcdc;
}
.vref {
  display: flex;
  align-items: center;
  gap: 14px;
  width: 100%;
  height: 31px;
  padding-left: 11px;
  border: 1px solid #bfc2c2;
}
.scroll-area {
  display: flex;
  justify-content: space-between;
}
.voltages {
  margin: 0;
  padding: 1px 0 0 21px;
  list-style: none;
}
.voltages li {
  display: flex;
  align-items: center;
  gap: 8px;
  height: 25px;
}
.vscroll {
  display: flex;
  flex: none;
  flex-direction: column;
  align-items: center;
  width: 14px;
  padding: 3px 0;
  border-left: 1px solid #f0f0f0;
}
.vscroll .ico12,
.hscroll .ico12 {
  width: 11px;
  height: 11px;
}
.vscroll .thumb {
  width: 9px;
  height: 36px;
  margin: 4px 0 auto;
  border-radius: 5px;
  background: #c2c2c2;
}
.hint {
  height: 57px;
  margin: 0;
  padding: 14px 8px 0 5px;
  line-height: 19px;
}

.file-bar {
  padding-left: 5px;
}
.ve {
  display: flex;
  align-items: center;
  justify-content: center;
  width: 13px;
  height: 13px;
  border-radius: 50%;
  background: radial-gradient(#b9dcf0, #4f94c6);
  color: #1f4f7c;
  font-size: 9px;
  line-height: 9px;
}
.file-name {
  margin: 0 auto 0 5px;
}
.props {
  height: 100px;
  border-top: 2px solid #e6e6e6;
  border-bottom: 1px dashed #9a9a9a;
}
.form {
  display: flex;
  flex: 1;
  flex-direction: column;
  padding: 15px 0 0 15px;
  overflow: hidden;
}
.check {
  display: grid;
  flex: none;
  grid-template-columns: 14px auto;
  align-items: center;
  justify-content: start;
  column-gap: 7px;
  height: 16px;
}
.check input {
  grid-area: 1 / 1;
  width: 14px;
  height: 14px;
  border: 1px solid #b0b0b0;
  appearance: none;
}
.check svg {
  grid-area: 1 / 1;
  margin-left: 1px;
}
.field {
  display: grid;
  flex: none;
  grid-template-columns: 101px auto;
  align-items: center;
  justify-content: start;
  height: 16px;
  margin-top: 14px;
}
.field.type {
  grid-template-columns: 102px 67px 27px;
  height: 27px;
  margin-top: 11px;
}
.field input {
  width: 67px;
  height: 27px;
  padding-left: 3px;
  border: 1px solid #c6c6c6;
  background: #eee;
}
.dots {
  width: 28px;
  height: 27px;
  margin-left: 8px;
  border: 1px solid #8c8c8c;
}
.subtabs {
  display: flex;
  align-items: center;
  height: 30px;
  padding-left: 3px;
  background: #f6f6f6;
}
.subtab {
  height: 24px;
  padding: 0 15px;
  color: #777;
}
.subtab.on {
  padding: 0 7px;
  border: 1px solid #cfcfcf;
  background: #fff;
  color: #111;
  font-size: 12px;
  font-weight: bold;
}

.canvas {
  display: flex;
  flex: 1;
  align-items: center;
  justify-content: center;
  border-top: 1px solid #cfcfcf;
  background: #000;
}
.chip {
  width: 407px;
  height: 407px;
}

.ports {
  display: flex;
  flex: 1;
  flex-direction: column;
  min-height: 0;
  margin-left: 5px;
  border-bottom: 0;
}
.table-wrap {
  flex: 1;
  overflow: hidden;
}
table {
  width: 100%;
  border-collapse: separate;
  border-spacing: 0;
  table-layout: fixed;
}
th,
td {
  height: 26px;
  padding: 0 8px;
  border-right: 1px solid #e2e2e2;
  font-weight: normal;
  text-align: left;
  white-space: nowrap;
}
th {
  border-top: 1px solid #e6e6e6;
  background: #ececec;
}
td {
  border-bottom: 1px solid #e8e8e8;
}
tbody tr:nth-child(2) td {
  height: 27px;
}
.num {
  text-align: right;
}
.node {
  display: flex;
  align-items: center;
  gap: 3px;
  margin-left: -2px;
}
.node .ico14 {
  margin: 0 2px 0 5px;
}
.child {
  margin-left: 13px;
}
.count {
  color: #8c8c8c;
}
.pick {
  display: flex;
  align-items: center;
  padding-right: 3px;
}
.pick select {
  flex: 1;
  min-width: 0;
}
.hscroll {
  display: flex;
  flex: none;
  align-items: center;
  height: 16px;
  padding: 0 4px 1px 2px;
  border-top: 1px solid #ebebeb;
  background: #fafafa;
}
.hscroll .track {
  flex: 1;
  padding: 0 5px;
}
.hscroll .thumb {
  height: 8px;
  border-radius: 4px;
  background: #c0c0c0;
}

.pointer {
  position: absolute;
  top: 41px;
  right: 104px;
  width: 24px;
  height: 168px;
}
.watermark {
  position: absolute;
  right: 24px;
  bottom: 22px;
  color: #8a8a8a;
  font-family: "Liberation Sans", "Noto Sans CJK SC", sans-serif;
  font-size: 18px;
  font-weight: 300;
  line-height: 26px;
  text-shadow: 1px 1px 0 #fff;
}
</style>
